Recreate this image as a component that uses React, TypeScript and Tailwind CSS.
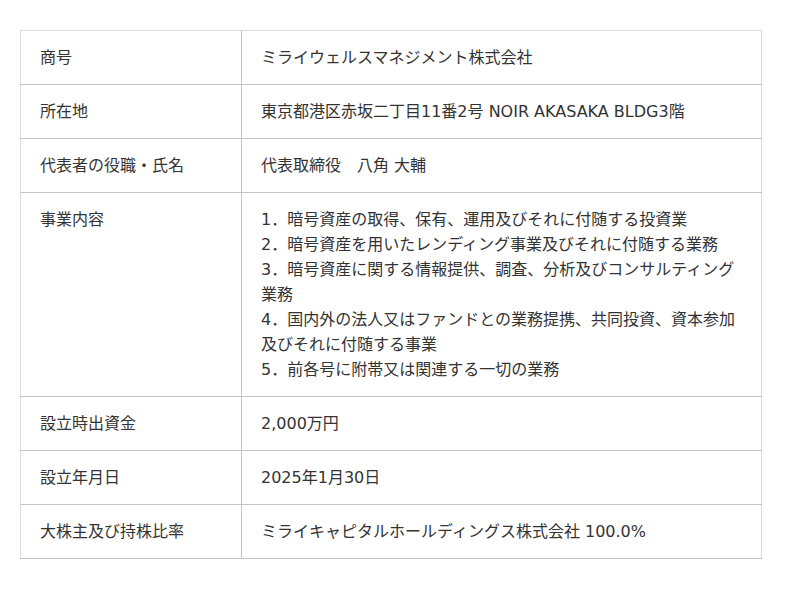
import React from 'react'

const rows: { label: string; value: React.ReactNode }[] = [
  { label: '商号', value: 'ミライウェルスマネジメント株式会社' },
  { label: '所在地', value: '東京都港区赤坂二丁目11番2号 NOIR AKASAKA BLDG3階' },
  { label: '代表者の役職・氏名', value: '代表取締役　八角 大輔' },
  {
    label: '事業内容',
    value: (
      <>
        1．暗号資産の取得、保有、運用及びそれに付随する投資業
        <br />
        2．暗号資産を用いたレンディング事業及びそれに付随する業務
        <br />
        3．暗号資産に関する情報提供、調査、分析及びコンサルティング業務
        <br />
        4．国内外の法人又はファンドとの業務提携、共同投資、資本参加及びそれに付随する事業
        <br />
        5．前各号に附帯又は関連する一切の業務
      </>
    ),
  },
  { label: '設立時出資金', value: '2,000万円' },
  { label: '設立年月日', value: '2025年1月30日' },
  { label: '大株主及び持株比率', value: 'ミライキャピタルホールディングス株式会社 100.0%' },
]

export default function App() {
  return (
    <div
      className="w-[800px] h-[589px] bg-white pt-[30px] px-[20px] text-[#333] text-[16px] leading-[25px]"
      style={{ fontFamily: '"DejaVu Sans", "Noto Sans CJK JP", sans-serif' }}
    >
      <table className="w-[742px] border-collapse border border-[#dcdcdc] table-fixed">
        <colgroup>
          <col className="w-[221px]" />
          <col />
        </colgroup>
        <tbody>
          {rows.map((row) => (
            <tr key={row.label} className="border-b border-[#c4c4c4]">
              <td className="align-top pl-[19px] pr-[22px] py-[14px] border-r border-[#c4c4c4]">{row.label}</td>
              <td className="align-top pl-[19px] pr-[22px] py-[14px]">{row.value}</td>
            </tr>
          ))}
        </tbody>
      </table>
    </div>
  )
}
